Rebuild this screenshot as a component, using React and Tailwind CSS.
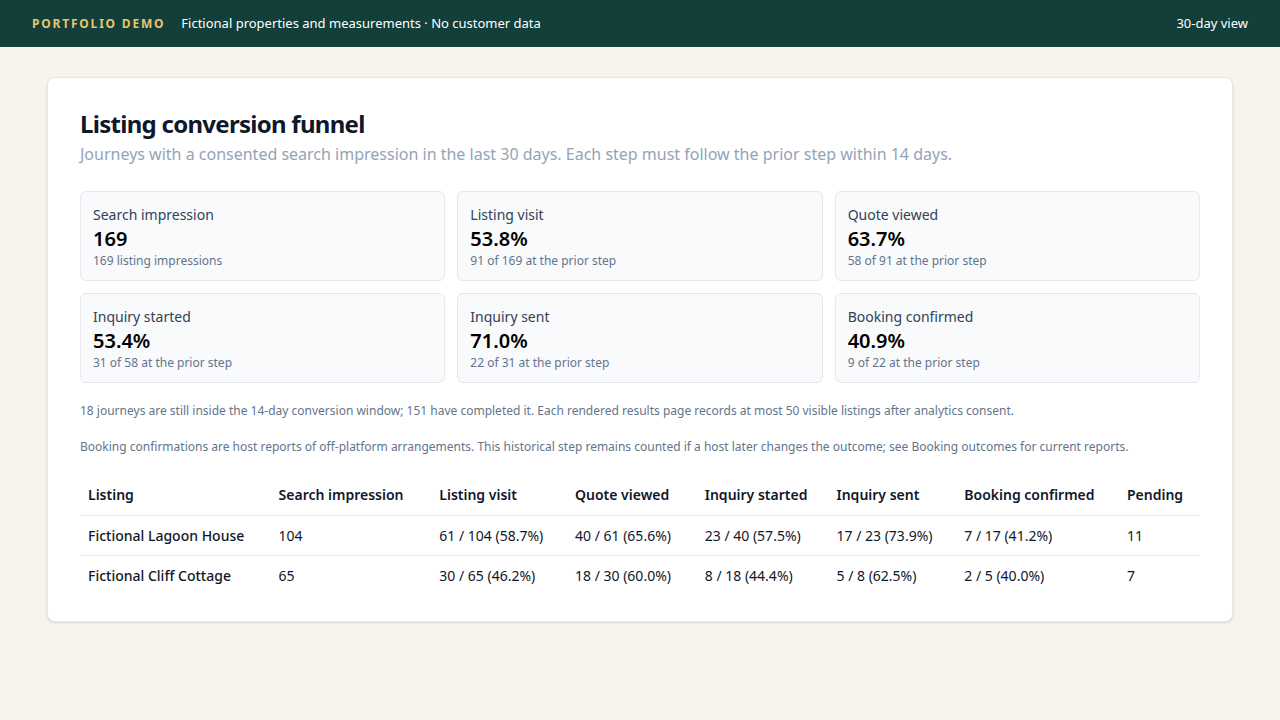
export default function App() {
  const cards = [
    ["Search impression", "169", "169 listing impressions"],
    ["Listing visit", "53.8%", "91 of 169 at the prior step"],
    ["Quote viewed", "63.7%", "58 of 91 at the prior step"],
    ["Inquiry started", "53.4%", "31 of 58 at the prior step"],
    ["Inquiry sent", "71.0%", "22 of 31 at the prior step"],
    ["Booking confirmed", "40.9%", "9 of 22 at the prior step"],
  ];
  const heads = ["Listing", "Search impression", "Listing visit", "Quote viewed", "Inquiry started", "Inquiry sent", "Booking confirmed", "Pending"];
  const widths = ["w-[191px]", "w-[161px]", "w-[136px]", "w-[130px]", "w-[132px]", "w-[128px]", "w-[163px]", "w-[81px]"];
  const rows = [
    ["Fictional Lagoon House", "104", "61 / 104 (58.7%)", "40 / 61 (65.6%)", "23 / 40 (57.5%)", "17 / 23 (73.9%)", "7 / 17 (41.2%)", "11"],
    ["Fictional Cliff Cottage", "65", "30 / 65 (46.2%)", "18 / 30 (60.0%)", "8 / 18 (44.4%)", "5 / 8 (62.5%)", "2 / 5 (40.0%)", "7"],
  ];
  return (
    <div className="min-h-[720px] bg-[#f7f4ed] font-['Inter',sans-serif] text-[#0f172a]">
      <div className="h-[47px] bg-[#123f3a] flex items-center px-8 text-white text-[13px]">
        <span className="text-[#e8c46a] font-bold tracking-[0.15em] text-[12px]">PORTFOLIO DEMO</span>
        <span className="ml-4">Fictional properties and measurements · No customer data</span>
        <span className="ml-auto">30-day view</span>
      </div>
      <div className="px-[47px] pt-[30px]">
        <div className="bg-white rounded-lg border border-[#e5e7eb] shadow-sm px-8 pt-[30px] pb-[26px]">
          <h1 className="text-[24px] font-bold tracking-[-0.03em] leading-[32px]">Listing conversion funnel</h1>
          <p className="text-[16px] text-[#94a3b8] mt-[2px]">Journeys with a consented search impression in the last 30 days. Each step must follow the prior step within 14 days.</p>
          <div className="grid grid-cols-3 gap-3 mt-[25px]">
            {cards.map(([a, b, c]) => (
              <div key={a} className="h-[90px] rounded-md border border-[#e5e7eb] bg-[#f8fafc] px-3 pt-[13px]">
                <div className="text-[14px] text-[#334155] leading-5">{a}</div>
                <div className="text-[20px] font-semibold leading-7 text-black">{b}</div>
                <div className="text-[12px] text-[#64748b] leading-4">{c}</div>
              </div>
            ))}
          </div>
          <p className="text-[12px] text-[#64748b] mt-[19px]">18 journeys are still inside the 14-day conversion window; 151 have completed it. Each rendered results page records at most 50 visible listings after analytics consent.</p>
          <p className="text-[12px] text-[#64748b] mt-[18px]">Booking confirmations are host reports of off-platform arrangements. This historical step remains counted if a host later changes the outcome; see Booking outcomes for current reports.</p>
          <table className="w-full mt-[18px] text-[14px] border-collapse">
            <thead>
              <tr className="border-b border-[#e5e7eb]">
                {heads.map((h, i) => (
                  <th key={h} className={`${widths[i]} text-left font-semibold px-2 py-[10px]`}>{h}</th>
                ))}
              </tr>
            </thead>
            <tbody>
              {rows.map((r, ri) => (
                <tr key={ri} className={ri === 0 ? "border-b border-[#e5e7eb]" : ""}>
                  {r.map((c, i) => (
                    <td key={i} className={`px-2 py-[9px] ${i === 0 ? "font-medium" : ""}`}>{c}</td>
                  ))}
                </tr>
              ))}
            </tbody>
          </table>
        </div>
      </div>
    </div>
  );
}
